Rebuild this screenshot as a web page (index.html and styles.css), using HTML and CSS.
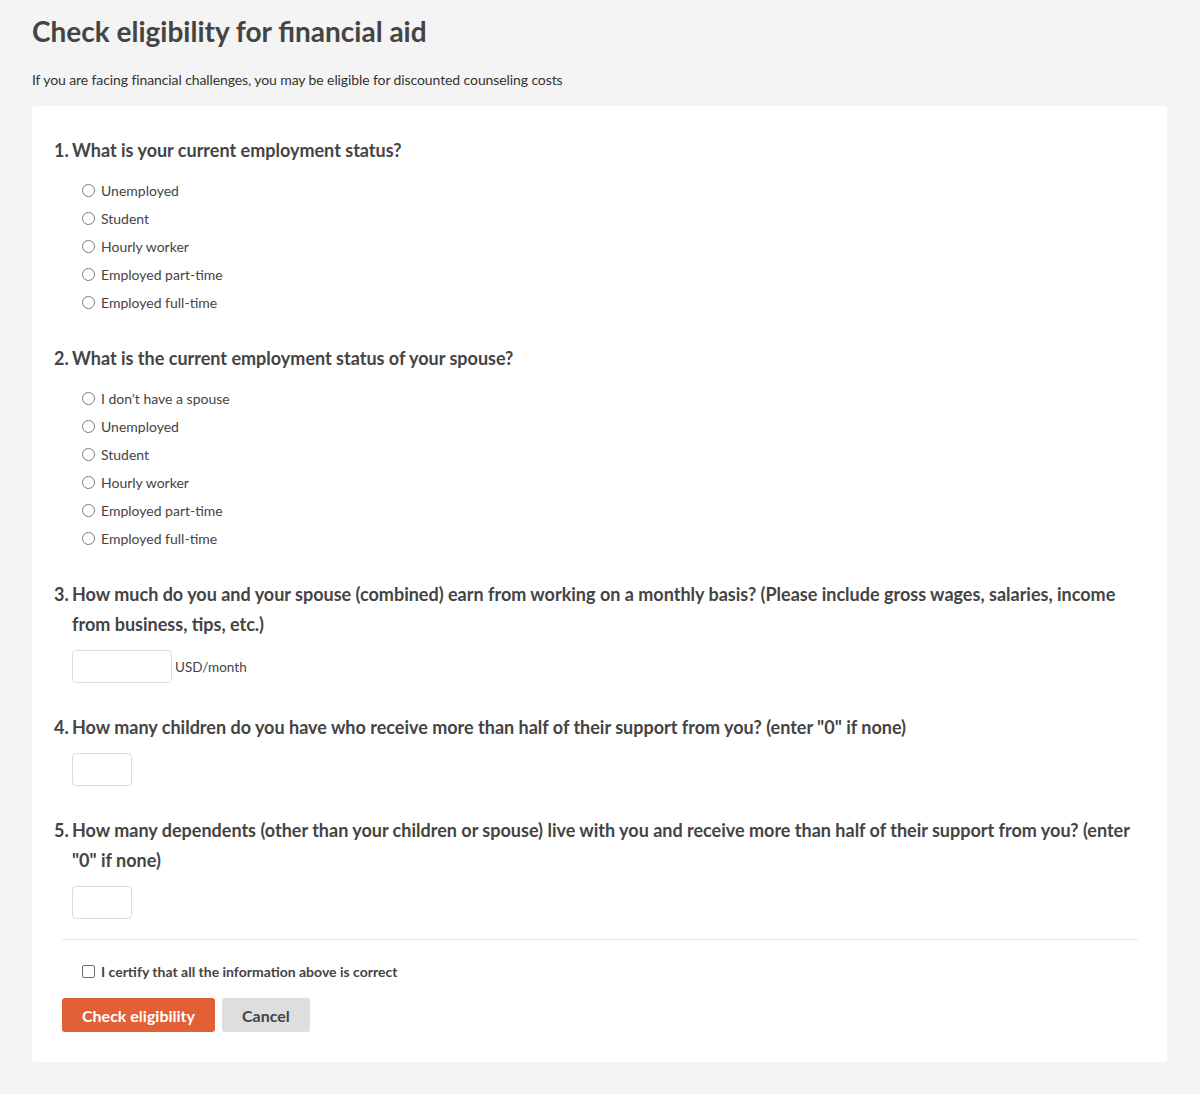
FILE: index.html
```html
<!DOCTYPE html>
<html lang="en">
<head>
    <meta charset="UTF-8">
    <meta name="viewport" content="width=device-width, initial-scale=1.0">
    <title>Financial aid</title>
    <link rel="stylesheet" href="styles.css">
</head>
<body>

<div class="page">
    <h1 class="title">Check eligibility for financial aid</h1>
    <p class="intro">If you are facing financial challenges, you may be eligible for discounted counseling costs</p>

    <form class="card">
        <ol class="questions">
            <li class="question">
                <div class="qtext">What is your current employment status?</div>
                <div class="options">
                    <label class="option"><input type="radio" name="emp"> Unemployed</label>
                    <label class="option"><input type="radio" name="emp"> Student</label>
                    <label class="option"><input type="radio" name="emp"> Hourly worker</label>
                    <label class="option"><input type="radio" name="emp"> Employed part-time</label>
                    <label class="option"><input type="radio" name="emp"> Employed full-time</label>
                </div>
            </li>
            <li class="question">
                <div class="qtext">What is the current employment status of your spouse?</div>
                <div class="options">
                    <label class="option"><input type="radio" name="spouse"> I don't have a spouse</label>
                    <label class="option"><input type="radio" name="spouse"> Unemployed</label>
                    <label class="option"><input type="radio" name="spouse"> Student</label>
                    <label class="option"><input type="radio" name="spouse"> Hourly worker</label>
                    <label class="option"><input type="radio" name="spouse"> Employed part-time</label>
                    <label class="option"><input type="radio" name="spouse"> Employed full-time</label>
                </div>
            </li>
            <li class="question">
                <div class="qtext">How much do you and your spouse (combined) earn from working on a monthly basis? (Please include gross wages, salaries, income from business, tips, etc.)</div>
                <div class="field">
                    <input type="text" class="box wide"><span class="unit">USD/month</span>
                </div>
            </li>
            <li class="question after-field">
                <div class="qtext">How many children do you have who receive more than half of their support from you? (enter "0" if none)</div>
                <div class="field">
                    <input type="text" class="box small">
                </div>
            </li>
            <li class="question after-field">
                <div class="qtext">How many dependents (other than your children or spouse) live with you and receive more than half of their support from you? (enter "0" if none)</div>
                <div class="field">
                    <input type="text" class="box small">
                </div>
            </li>
        </ol>

        <hr class="divider">

        <label class="certify"><input type="checkbox"> I certify that all the information above is correct</label>

        <div class="buttons">
            <button type="button" class="btn btn-primary">Check eligibility</button>
            <button type="button" class="btn btn-cancel">Cancel</button>
        </div>
    </form>
</div>

</body>
</html>
```

FILE: styles.css
```css
body{
    margin: 0;
    background-color: #f4f4f4;
    font-family: Lato, "Open Sans", sans-serif;
    color: #444;
}
.page{
    padding: 14px 33px 32px 32px;
}
.title{
    margin: 0;
    font-size: 28px;
    line-height: 34px;
    font-weight: 700;
    color: #444;
}
.intro{
    margin: 22px 0 16px;
    font-size: 14px;
    line-height: 20px;
    color: #333;
    letter-spacing: -0.1px;
}

.card{
    background-color: #fff;
    border-radius: 4px;
    padding: 29px 29px 30px 30px;
}
.questions{
    margin: 0;
    padding: 0 0 0 10px;
    list-style: none;
    counter-reset: q;
}
.question{
    counter-increment: q;
    margin-top: 27px;
}
.question:first-child{
    margin-top: 0;
}
.question.after-field{
    margin-top: 29px;
}
.qtext{
    position: relative;
    font-size: 18px;
    line-height: 30px;
    font-weight: 700;
    color: #444;
}
.qtext::before{
    content: counter(q) ".";
    position: absolute;
    left: -18px;
}
.options{
    margin-top: 11px;
    padding-left: 10px;
    display: flex;
    flex-direction: column;
}
.option{
    display: flex;
    align-items: center;
    height: 28px;
    font-size: 14px;
    color: #444;
}
.option input{
    appearance: none;
    width: 13px;
    height: 13px;
    margin: 0 6px 0 0;
    border: 1px solid #7a7a7a;
    border-radius: 50%;
    background: #fff;
}

.field{
    margin-top: 11px;
    display: flex;
    align-items: center;
}
.box{
    box-sizing: border-box;
    height: 33px;
    border: 1px solid #dcdcdc;
    border-radius: 4px;
    margin: 0;
    padding: 4px 8px;
    font-family: inherit;
}
.box.wide{
    width: 100px;
}
.box.small{
    width: 60px;
}
.unit{
    margin-left: 3px;
    font-size: 13.5px;
    color: #444;
}

.divider{
    margin: 20px 0 0;
    border: none;
    border-top: 1px solid #e8e8e8;
}
.certify{
    display: flex;
    align-items: center;
    height: 28px;
    margin-top: 17px;
    padding-left: 20px;
    font-size: 14px;
    font-weight: 700;
    color: #444;
}
.certify input{
    appearance: none;
    width: 13px;
    height: 13px;
    margin: 0 6px 0 0;
    border: 1px solid #6f6f6f;
    border-radius: 2px;
    background: #fff;
}
.buttons{
    margin-top: 13px;
    display: flex;
    gap: 7px;
}
.btn{
    height: 34px;
    border: none;
    border-radius: 3px;
    font-family: inherit;
    font-size: 16px;
    font-weight: 700;
    padding: 0 20px;
}
.btn-primary{
    background-color: #e35f35;
    color: #fff;
}
.btn-cancel{
    background-color: #dedede;
    color: #444;
}
```
